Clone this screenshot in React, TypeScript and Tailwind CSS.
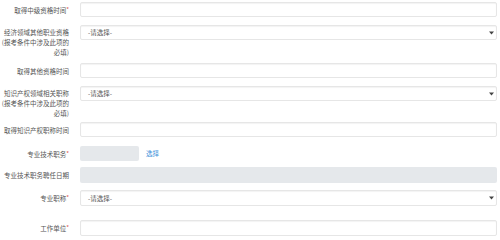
const font = { fontFamily: '"Noto Sans CJK SC", "Liberation Sans", sans-serif' };

function Star() {
  return <span className="text-[#e0564f] text-[6px] align-top">*</span>;
}

function Label({ children, multi }: { children: React.ReactNode; multi?: boolean }) {
  return (
    <div
      className={`w-[70px] shrink-0 whitespace-nowrap pr-[1px] text-right text-[6.5px] text-[#555] ${
        multi ? "pt-[2px] leading-[10px]" : "self-center leading-[10px]"
      }`}
    >
      {children}
    </div>
  );
}

function TextBox({ h = "h-[15px]" }: { h?: string }) {
  return (
    <div
      className={`${h} flex-1 rounded-[2px] border border-[#e6e6e6] bg-white shadow-[inset_0_1px_1px_rgba(0,0,0,0.05)]`}
    />
  );
}

function SelectBox({ h = "h-[15px]" }: { h?: string }) {
  return (
    <div
      className={`${h} flex flex-1 items-center justify-between rounded-[2px] border border-[#e6e6e6] bg-white pl-[7px] pr-[2px] shadow-[inset_0_1px_1px_rgba(0,0,0,0.05)]`}
    >
      <span className="text-[6.5px] leading-none text-[#555]">-请选择-</span>
      <svg width="5" height="4" viewBox="0 0 5 4">
        <path d="M0 0.5h5L2.5 3.5z" fill="#444" />
      </svg>
    </div>
  );
}

export default function App() {
  return (
    <div className="w-[500px] h-[240px] overflow-hidden bg-white pr-[3px] pt-[2px]" style={font}>
      {/* 取得中级资格时间 */}
      <div className="flex gap-[10px]">
        <Label>
          取得中级资格时间<Star />
        </Label>
        <TextBox />
      </div>

      <div className="mt-[8px] flex items-start gap-[10px]">
        <Label multi>
          经济领域其他职业资格
          <br />
          (报考条件中涉及此项的
          <br />
          必填)
        </Label>
        <SelectBox />
      </div>

      <div className="mt-[6px] flex gap-[10px]">
        <Label>取得其他资格时间</Label>
        <TextBox />
      </div>

      <div className="mt-[8px] flex items-start gap-[10px]">
        <Label multi>
          知识产权领域相关职称
          <br />
          (报考条件中涉及此项的
          <br />
          必填)
        </Label>
        <SelectBox />
      </div>

      <div className="mt-[4px] flex gap-[10px]">
        <Label>取得知识产权职称时间</Label>
        <TextBox />
      </div>

      <div className="mt-[9px] flex gap-[10px]">
        <Label>
          专业技术职务<Star />
        </Label>
        <div className="flex flex-1 items-center gap-[7px]">
          <div className="h-[15px] w-[59px] rounded-[2px] bg-[#e5e8eb]" />
          <a className="text-[6.5px] leading-none text-[#3b8fd9]">选择</a>
        </div>
      </div>

      <div className="mt-[6px] flex gap-[10px]">
        <Label>专业技术职务聘任日期</Label>
        <div className="h-[16px] flex-1 rounded-[2px] bg-[#e5e8eb]" />
      </div>

      <div className="mt-[7px] flex gap-[10px]">
        <Label>
          专业职称<Star />
        </Label>
        <SelectBox h="h-[16px]" />
      </div>

      <div className="mt-[14px] flex gap-[10px]">
        <Label>
          工作单位<Star />
        </Label>
        <TextBox h="h-[16px]" />
      </div>
    </div>
  );
}
